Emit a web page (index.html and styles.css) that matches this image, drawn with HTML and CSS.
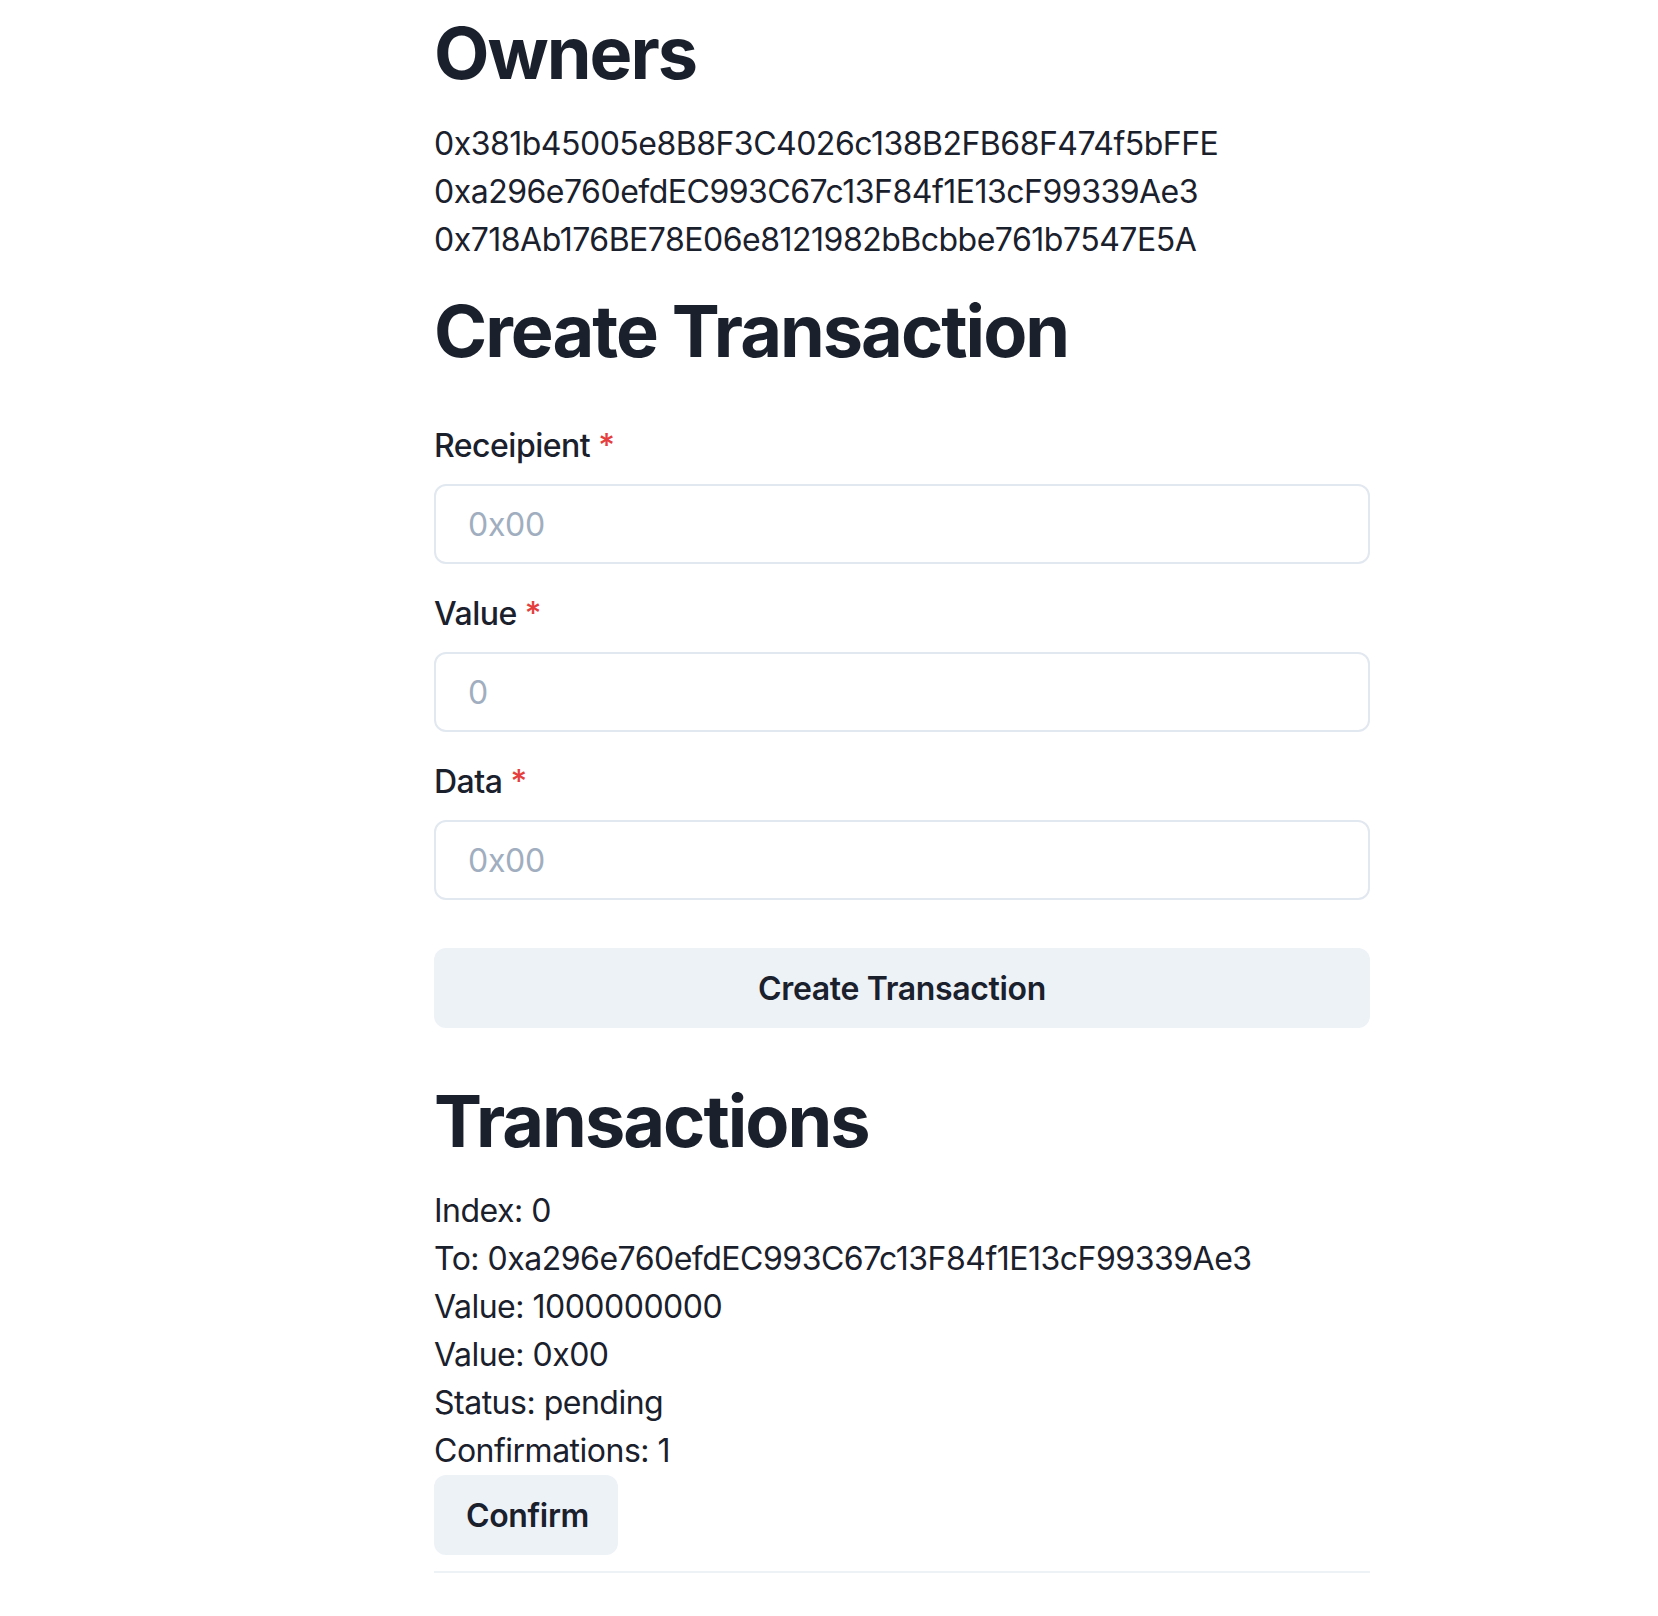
FILE: index.html
```html
<!DOCTYPE html>
<html lang="en">
<head>
<meta charset="utf-8">
<title>Multisig Wallet</title>
<link rel="stylesheet" href="styles.css">
</head>
<body>
<main class="container">
  <h1 class="heading">Owners</h1>
  <div class="owners">
    <div class="line">0x381b45005e8B8F3C4026c138B2FB68F474f5bFFE</div>
    <div class="line">0xa296e760efdEC993C67c13F84f1E13cF99339Ae3</div>
    <div class="line">0x718Ab176BE78E06e8121982bBcbbe761b7547E5A</div>
  </div>

  <h1 class="heading heading-create">Create Transaction</h1>
  <form class="form">
    <div class="field">
      <label class="label" for="recipient">Receipient<span class="req">*</span></label>
      <input class="input" id="recipient" type="text" placeholder="0x00">
    </div>
    <div class="field">
      <label class="label" for="value">Value<span class="req">*</span></label>
      <input class="input" id="value" type="text" placeholder="0">
    </div>
    <div class="field">
      <label class="label" for="data">Data<span class="req">*</span></label>
      <input class="input" id="data" type="text" placeholder="0x00">
    </div>
    <button class="btn btn-full" type="button">Create Transaction</button>
  </form>

  <h1 class="heading heading-tx">Transactions</h1>
  <div class="tx">
    <div class="line">Index: 0</div>
    <div class="line">To: 0xa296e760efdEC993C67c13F84f1E13cF99339Ae3</div>
    <div class="line">Value: 1000000000</div>
    <div class="line">Value: 0x00</div>
    <div class="line">Status: pending</div>
    <div class="line">Confirmations: 1</div>
    <button class="btn btn-confirm" type="button">Confirm</button>
    <hr class="divider">
  </div>
</main>
</body>
</html>
```

FILE: styles.css
```css
* {
  box-sizing: border-box;
}

html, body {
  margin: 0;
  padding: 0;
  background: #ffffff;
}

body {
  font-family: Inter, "Noto Sans", "Liberation Sans", sans-serif;
  color: #1a202c;
  font-size: 32px;
  line-height: 48px;
}

.container {
  width: 936px;
  margin: 0 0 0 434px;
  padding-top: 10px;
}

.heading {
  margin: 0;
  font-size: 72px;
  line-height: 86px;
  font-weight: 700;
  color: #1a202c;
  letter-spacing: -2px;
}

.owners {
  margin-top: 24px;
}

.line {
  font-size: 32px;
  line-height: 48px;
  white-space: nowrap;
  letter-spacing: -0.5px;
}

.heading-create {
  margin-top: 24px;
}

.form {
  margin-top: 46px;
  display: flex;
  flex-direction: column;
  gap: 24px;
}

.field {
  display: flex;
  flex-direction: column;
}

.label {
  font-size: 32px;
  line-height: 48px;
  font-weight: 500;
  padding-top: 2px;
  margin-bottom: 14px;
  letter-spacing: -0.5px;
}

.req {
  color: #e53e3e;
  margin-left: 8px;
}

.input {
  height: 80px;
  width: 100%;
  border: 2px solid #e2e8f0;
  border-radius: 12px;
  padding: 0 32px;
  font-family: inherit;
  font-size: 32px;
  letter-spacing: -0.3px;
  color: #1a202c;
  background: #ffffff;
  outline: none;
}

.input::placeholder {
  color: #a0aec0;
  opacity: 1;
}

.btn {
  height: 80px;
  border: none;
  border-radius: 12px;
  background: #edf2f7;
  color: #1a202c;
  font-family: inherit;
  font-size: 32px;
  font-weight: 600;
  letter-spacing: -0.35px;
  padding: 0 32px;
  cursor: pointer;
}

.btn-full {
  width: 100%;
  margin-top: 24px;
}

.heading-tx {
  margin-top: 50px;
}

.tx {
  margin-top: 22px;
}

.tx .line:first-child {
  padding-top: 1px;
}

.btn-confirm {
  display: block;
  width: 184px;
}

.divider {
  margin: 16px 0 0;
  border: none;
  border-top: 2px solid #edf2f7;
  height: 0;
}
```
